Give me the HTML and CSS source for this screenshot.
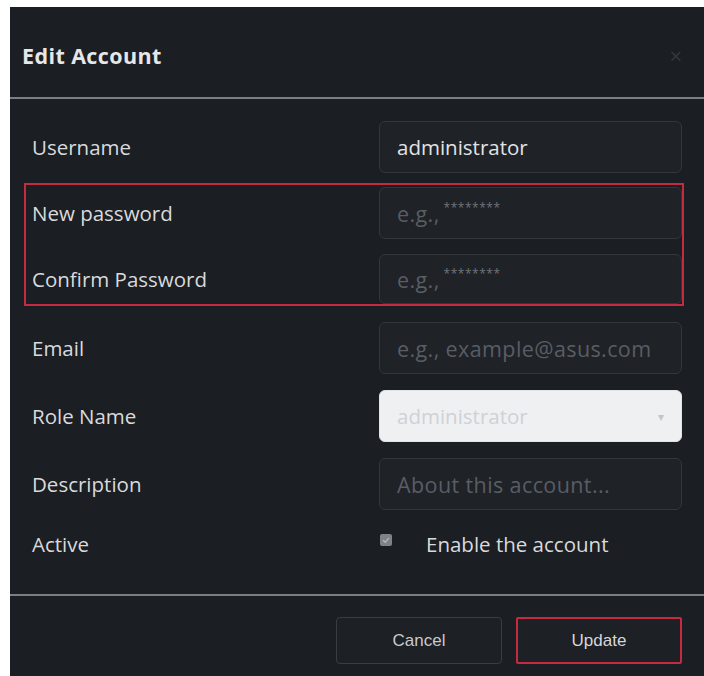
FILE: index.html
```html
<!DOCTYPE html>
<html lang="en">
<head>
    <meta charset="UTF-8">
    <meta name="viewport" content="width=device-width, initial-scale=1.0">
    <title>Edit Account</title>
    <link rel="stylesheet" href="styles.css">
</head>
<body>
    <div class="dialog">
        <div class="dialog-header">
            <h2>Edit Account</h2>
            <span class="close">&times;</span>
        </div>

        <div class="dialog-body">
            <div class="row">
                <label>Username</label>
                <div class="field">administrator</div>
            </div>

            <div class="highlight">
                <div class="row">
                    <label>New password</label>
                    <div class="field placeholder">e.g., <span class="stars">********</span></div>
                </div>
                <div class="row">
                    <label>Confirm Password</label>
                    <div class="field placeholder">e.g., <span class="stars">********</span></div>
                </div>
            </div>

            <div class="row">
                <label>Email</label>
                <div class="field placeholder">e.g., example@asus.com</div>
            </div>

            <div class="row">
                <label>Role Name</label>
                <div class="field select">
                    <span>administrator</span>
                    <span class="caret">&#9662;</span>
                </div>
            </div>

            <div class="row">
                <label>Description</label>
                <div class="field placeholder">About this account...</div>
            </div>

            <div class="row row-active">
                <label>Active</label>
                <div class="check">
                    <span class="box">
                        <svg width="8" height="8" viewBox="0 0 8 8"><path d="M1 4.2 L3.2 6.2 L7 1.8" stroke="#b4b7bb" stroke-width="1.3" fill="none"/></svg>
                    </span>
                    <span>Enable the account</span>
                </div>
            </div>
        </div>

        <div class="dialog-footer">
            <button class="btn">Cancel</button>
            <button class="btn btn-update">Update</button>
        </div>
    </div>
</body>
</html>
```

FILE: styles.css
```css
body {
    margin: 0;
    padding: 7px 0 0 10px;
    background: #ffffff;
    font-family: "Open Sans", "Noto Sans", sans-serif;
}
.dialog {
    background: #1b1e23;
    height: 669px;
    overflow: hidden;
    color: #d9dadc;
}
.dialog-header {
    height: 84px;
    display: flex;
    align-items: center;
    justify-content: space-between;
    padding: 6px 22px 0 12px;
    border-bottom: 2px solid #7b7e83;
}
.dialog-header h2 {
    margin: 0;
    font-size: 21.5px;
    font-weight: 700;
    letter-spacing: 0.4px;
    color: #e6e7e8;
}
.close {
    font-size: 22px;
    color: #34373c;
}
.dialog-body {
    padding: 22px 20px 35px 14px;
}
.row {
    display: grid;
    grid-template-columns: 1fr 303px;
    align-items: center;
    padding: 0 2px 0 8px;
    margin-bottom: 16px;
}
.row label {
    font-size: 20.5px;
}
.field {
    height: 52px;
    box-sizing: border-box;
    border: 1px solid #33363c;
    border-radius: 6px;
    background: #1f2227;
    padding: 0 17px;
    display: flex;
    align-items: center;
    font-size: 20.5px;
    color: #e2e3e5;
}
.placeholder {
    color: #595d64;
    font-size: 21.5px;
    letter-spacing: 0.4px;
}
.stars {
    font-size: 12px;
    position: relative;
    top: -6px;
    margin-left: 4px;
    letter-spacing: 0.5px;
    color: #70747b;
}
.select {
    background: #eff0f2;
    border-color: #e2e3e6;
    color: #cfd1d5;
    justify-content: space-between;
}
.caret {
    font-size: 12px;
    color: #c3c5c9;
}
.highlight {
    border: 2px solid #c52a40;
    padding: 2px 0 0;
    margin: -6px 0 16px;
}
.highlight .row {
    padding: 0 0 0 6px;
    margin-bottom: 15px;
}
.highlight .row:last-child {
    margin-bottom: 0;
}
.highlight .row:last-child .field {
    height: 50px;
}
.row-active {
    margin: 19px 0 0;
    height: 30px;
}
.check {
    display: flex;
    align-items: center;
    gap: 34px;
    font-size: 20.5px;
    padding-left: 1px;
}
.box {
    width: 12px;
    height: 12px;
    border-radius: 2px;
    background: #7f8388;
    display: flex;
    align-items: center;
    justify-content: center;
    margin-top: -8px;
}
.dialog-footer {
    border-top: 2px solid #7b7e83;
    display: flex;
    justify-content: flex-end;
    gap: 14px;
    padding: 21px 22px 0 0;
}
.btn {
    width: 166px;
    height: 47px;
    background: #1d2025;
    border: 1px solid #393c42;
    border-radius: 4px;
    color: #c9cacc;
    font-family: "Liberation Sans", Arial, sans-serif;
    font-size: 17px;
}
.btn-update {
    border: 2px solid #c52a40;
    border-radius: 2px;
    color: #d6d7d9;
}
```
